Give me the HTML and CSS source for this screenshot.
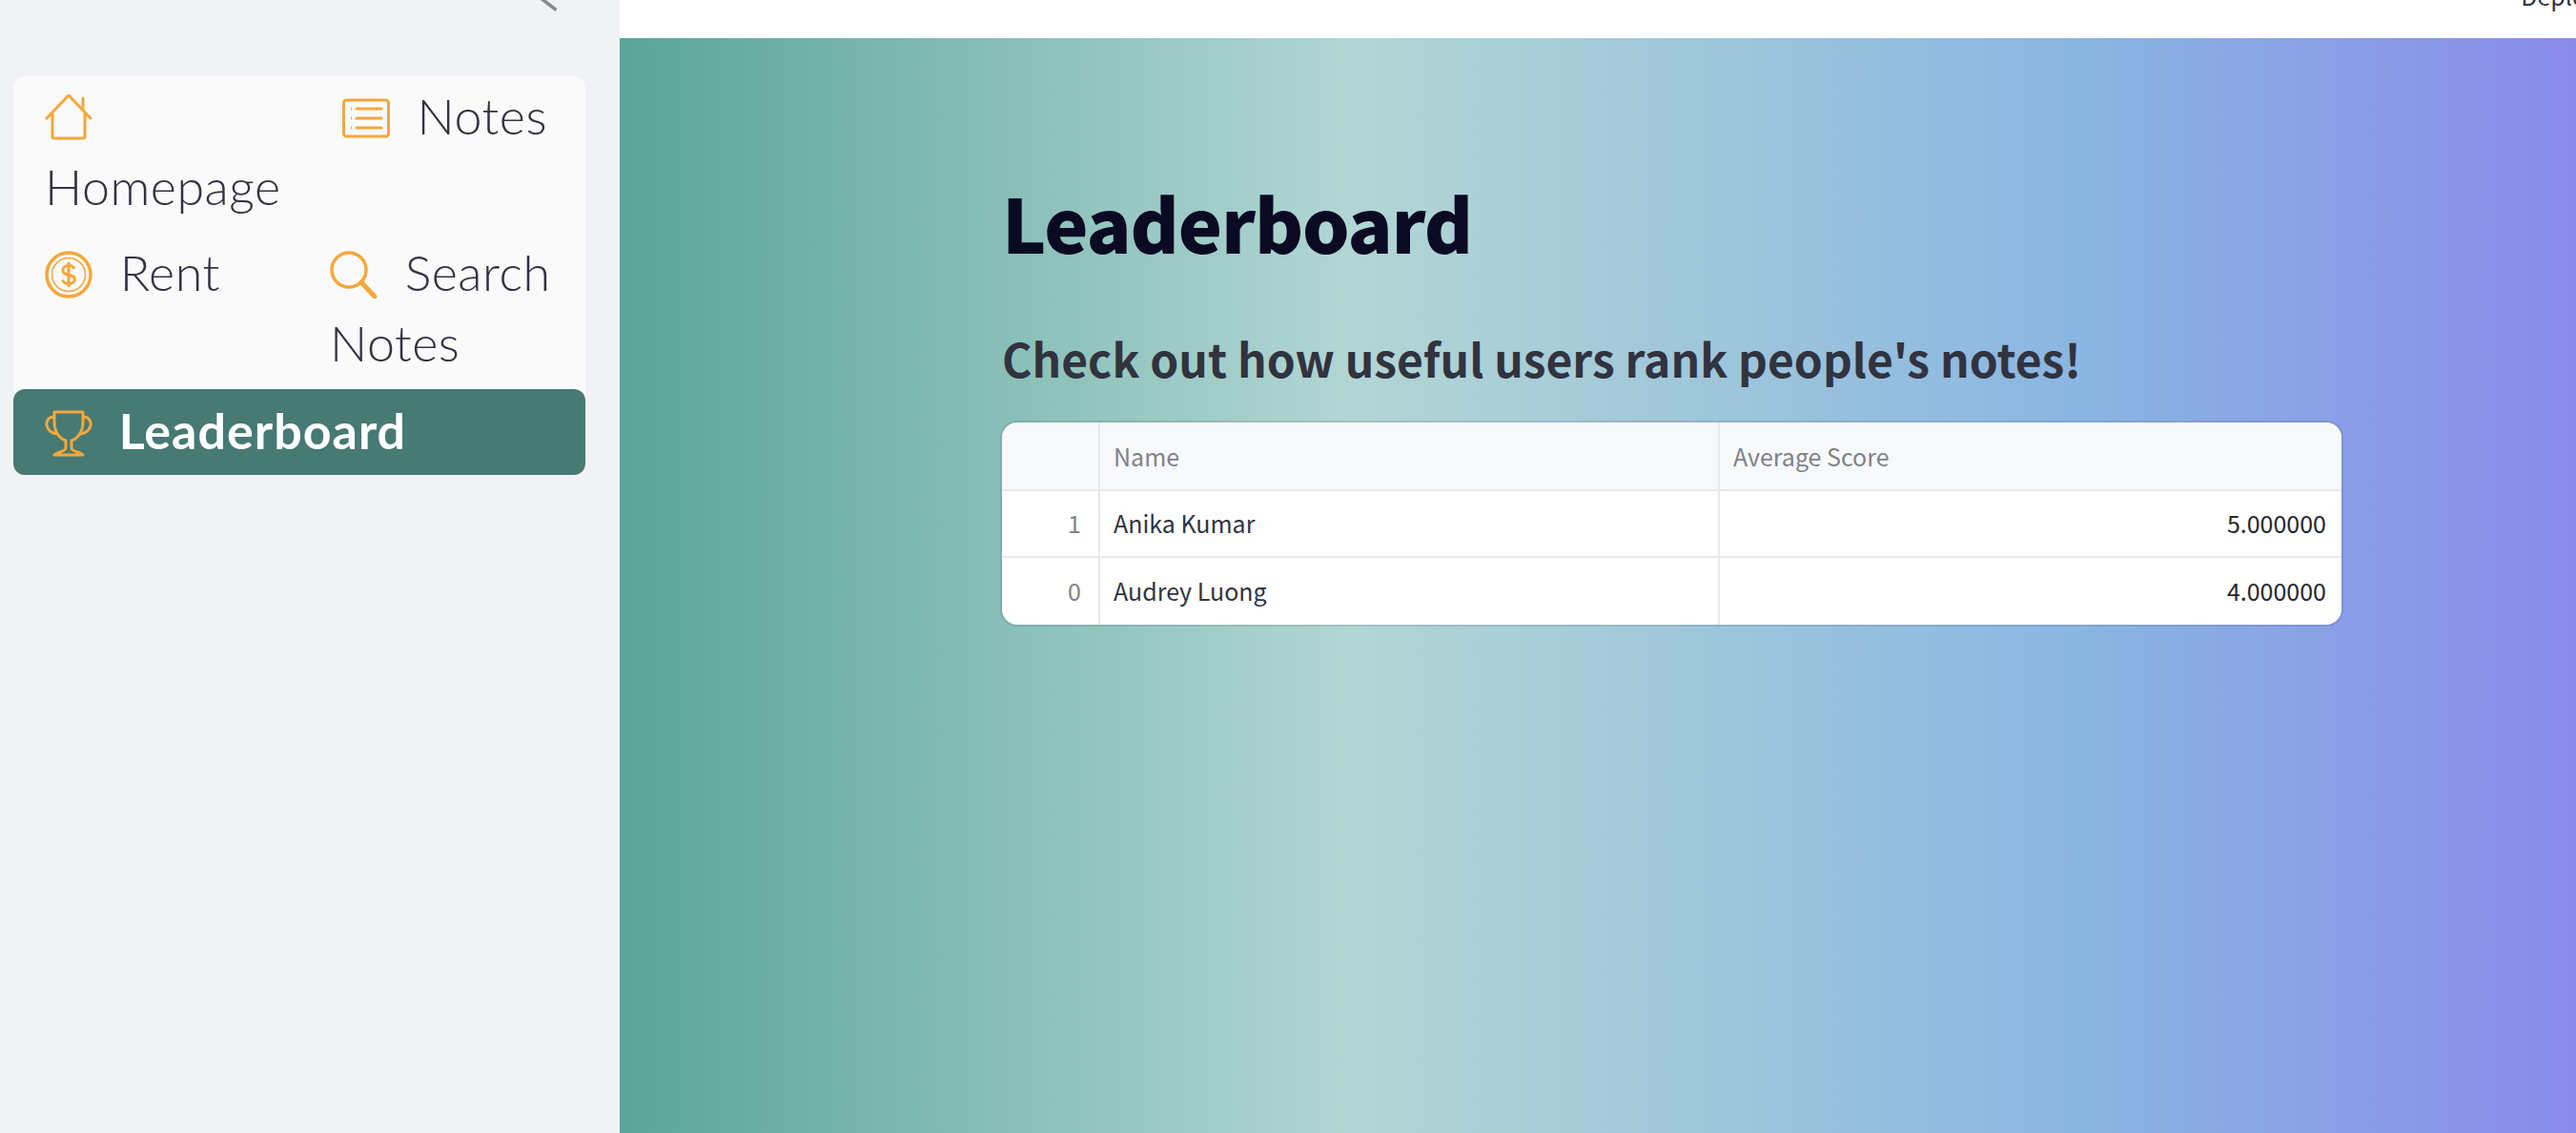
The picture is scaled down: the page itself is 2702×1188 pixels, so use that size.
FILE: index.html
```html
<!DOCTYPE html>
<html lang="en">
<head>
    <meta charset="UTF-8">
    <title>Leaderboard</title>
    <link rel="stylesheet" href="styles.css">
</head>
<body>
    <aside class="sidebar">
        <div class="sidebar-top">
            <svg class="collapse-icon" width="20" height="14" viewBox="0 0 20 14"><path d="M4 -1.4 L19.5 10.5" fill="none" stroke="#85868f" stroke-width="3.5"/></svg>
        </div>
        <nav class="nav-card">
            <div class="nav-row nav-row-first">
                <a class="nav-item item-home">
                    <svg class="nav-icon" viewBox="0 0 50 50"><path d="M2 25 L25 1 L48 25 M40 16 V4 M8 19 V44 a2 2 0 0 0 2 2 H40 a2 2 0 0 0 2 -2 V19" fill="none" stroke="#f5a73b" stroke-width="3" stroke-linecap="round" stroke-linejoin="round"/></svg>
                    <span>Homepage</span>
                </a>
                <a class="nav-item item-notes">
                    <svg class="nav-icon" viewBox="0 0 50 50"><rect x="1.5" y="6" width="47" height="38" rx="3" fill="none" stroke="#f5a73b" stroke-width="3"/><path d="M15 15 H41 M15 25 H41 M15 35 H41" stroke="#f5a73b" stroke-width="3" stroke-linecap="round"/><path d="M9 15 H10 M9 25 H10 M9 35 H10" stroke="#f5a73b" stroke-width="3"/></svg>
                    <span>Notes</span>
                </a>
            </div>
            <div class="nav-row nav-row-second">
                <a class="nav-item item-rent">
                    <svg class="nav-icon" viewBox="0 0 50 50"><circle cx="25" cy="25" r="23" fill="none" stroke="#f5a73b" stroke-width="3.5"/><circle cx="25" cy="25" r="17.5" fill="none" stroke="#f5a73b" stroke-width="1.5"/><path d="M31 19 C30 16 27 15.5 25 15.5 C21 15.5 18.8 18 18.8 20.5 C18.8 27 31.5 23.5 31.5 29.8 C31.5 32.5 29 34.5 25 34.5 C22 34.5 19.5 33 18.5 30.5 M25 12 V38" fill="none" stroke="#f5a73b" stroke-width="3"/></svg>
                    <span>Rent</span>
                </a>
                <a class="nav-item item-search">
                    <svg class="nav-icon" viewBox="0 0 50 50"><circle cx="20" cy="20" r="18" fill="none" stroke="#f5a73b" stroke-width="3.5"/><path d="M33 33 L47 48" stroke="#f5a73b" stroke-width="5" stroke-linecap="round"/></svg>
                    <span>Search Notes</span>
                </a>
            </div>
            <a class="nav-item nav-active">
                <svg class="nav-icon" viewBox="0 0 50 50"><path d="M10 3 H40 V14 C40 26 32 32 28 33 V41 C28 44 34 44 40 48 H10 C16 44 22 44 22 41 V33 C18 32 10 26 10 14 Z" fill="none" stroke="#f5a73b" stroke-width="3" stroke-linejoin="round"/><path d="M10 8 C-2 8 -1 25 14 26 M40 8 C52 8 51 25 36 26" fill="none" stroke="#f5a73b" stroke-width="3"/></svg>
                <span>Leaderboard</span>
            </a>
        </nav>
    </aside>

    <div class="main-wrap">
        <header class="top-bar"><span class="deploy">Deploy</span></header>
        <main class="main">
            <div class="content">
                <h1>Leaderboard</h1>
                <h2>Check out how useful users rank people's notes!</h2>
                <table class="score-table">
                    <thead>
                        <tr><th class="col-index"></th><th class="col-name">Name</th><th>Average Score</th></tr>
                    </thead>
                    <tbody>
                        <tr><td class="col-index">1</td><td class="col-name">Anika Kumar</td><td class="col-score">5.000000</td></tr>
                        <tr><td class="col-index">0</td><td class="col-name">Audrey Luong</td><td class="col-score">4.000000</td></tr>
                    </tbody>
                </table>
            </div>
        </main>
    </div>
</body>
</html>
```

FILE: styles.css
```css
* {
    box-sizing: border-box;
}

html, body {
    height: 100%;
}

body {
    margin: 0;
    display: flex;
    overflow: hidden;
    color: #31333f;
    font-family: "Noto Sans CJK SC", "Noto Sans", sans-serif;
}

.sidebar {
    width: 650px;
    flex-shrink: 0;
    background: #f0f2f6;
    padding: 0 36px 0 14px;
}

.sidebar-top {
    height: 80px;
    display: flex;
    justify-content: flex-end;
    align-items: flex-start;
    padding-right: 30px;
}

.nav-card {
    background: #fafafa;
    border-radius: 12px;
    font-family: Lato, sans-serif;
    font-weight: 300;
    font-size: 52px;
    letter-spacing: 0.5px;
    line-height: 74px;
}

.nav-row {
    display: flex;
    justify-content: space-between;
}

.nav-row-first {
    height: 162px;
    padding-top: 4px;
}

.nav-row-second {
    height: 166px;
}

.nav-item {
    display: block;
    padding: 0 40px 0 33px;
}

.nav-icon {
    width: 50px;
    height: 50px;
    vertical-align: -8px;
    margin-right: 14px;
}

.item-home {
    width: 320px;
}

.item-notes {
    padding-left: 0;
    white-space: nowrap;
}

.item-rent {
    padding-top: 6px;
}

.item-search {
    width: 268px;
    padding: 6px 0 0;
}

.nav-active {
    height: 90px;
    line-height: 86px;
    background: #467a73;
    border-radius: 12px;
    color: #fff;
    font-weight: 700;
    letter-spacing: 1px;
}

.main-wrap {
    flex: 1;
    min-width: 0;
    display: flex;
    flex-direction: column;
}

.top-bar {
    height: 40px;
    background: #fff;
    overflow: hidden;
    display: flex;
    justify-content: flex-end;
}

.deploy {
    margin: -25px -24px 0 0;
    font-size: 25px;
    line-height: 40px;
    white-space: nowrap;
}

.main {
    flex: 1;
    background: linear-gradient(90deg, #5aa598 0%, #b2d6d4 37.5%, #8ab5e2 75%, #8a8aea 100%);
    padding: 0 246px 0 401px;
}

.content {
    padding-top: 144px;
}

h1 {
    margin: 0;
    font-size: 78px;
    letter-spacing: -1.2px;
    line-height: 96px;
    font-weight: 900;
    color: #0a0a23;
}

h2 {
    margin: 66px 0 0;
    font-size: 48px;
    line-height: 58px;
    font-weight: 700;
    color: #31333f;
}

.score-table {
    margin-top: 39px;
    width: 1405px;
    height: 211px;
    table-layout: fixed;
    border-collapse: separate;
    border-spacing: 0;
    background: #fff;
    border-radius: 16px;
    overflow: hidden;
    font-size: 25px;
    box-shadow: 0 0 0 2px rgba(49, 51, 63, 0.12);
}

.score-table th, .score-table td {
    padding: 0 16px 0 14px;
    border-right: 2px solid #e8e9ec;
    border-bottom: 2px solid #e8e9ec;
    font-weight: 400;
    text-align: left;
}

.score-table th:last-child, .score-table td:last-child {
    border-right: none;
}

.score-table tr:last-child td {
    border-bottom: none;
}

.score-table th {
    height: 72px;
    background: #f8f9fb;
    color: #808289;
}

.score-table td {
    height: 70px;
}

.score-table tbody td {
    padding-bottom: 2px;
}

.score-table .col-index {
    width: 103px;
    padding-right: 18px;
    text-align: right;
    color: #808289;
}

.score-table .col-name {
    width: 650px;
}

.score-table .col-score {
    text-align: right;
    color: #262730;
}
```
